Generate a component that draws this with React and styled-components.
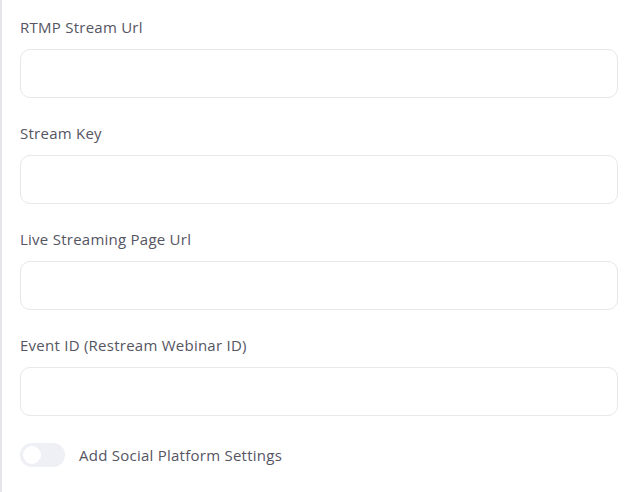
import { useState } from 'react'
import styled, { createGlobalStyle } from 'styled-components'

const GlobalStyle = createGlobalStyle`
  body {
    margin: 0;
    background: #ffffff;
    font-family: 'Open Sans', 'Liberation Sans', sans-serif;
  }
`

const Panel = styled.div`
  box-sizing: border-box;
  min-height: 492px;
  padding: 17px 25px 0 18px;
  border-left: 2px solid #e6e6ea;
  background: #ffffff;
`

const Field = styled.div`
  display: flex;
  flex-direction: column;
  gap: 12px;
  margin-bottom: 25px;
`

const Label = styled.label`
  font-size: 15px;
  font-weight: 500;
  line-height: 20px;
  letter-spacing: 0.25px;
  color: #555563;
`

const Input = styled.input`
  box-sizing: border-box;
  width: 100%;
  height: 49px;
  padding: 0 14px;
  border: 1px solid #e7e7ec;
  border-radius: 10px;
  background: #ffffff;
  font: inherit;
  font-size: 14px;
  color: #333;
  outline: none;
`

const ToggleRow = styled.div`
  display: flex;
  align-items: center;
  gap: 14px;
  margin-top: 27px;
`

const Switch = styled.button`
  position: relative;
  width: 45px;
  height: 24px;
  padding: 0;
  border: none;
  border-radius: 12px;
  background: ${(p) => (p.$on ? '#4f7cff' : '#eff0f5')};
  cursor: pointer;

  &::after {
    content: '';
    position: absolute;
    top: 3px;
    left: ${(p) => (p.$on ? '24px' : '3px')};
    width: 18px;
    height: 18px;
    border-radius: 50%;
    background: #ffffff;
  }
`

const ToggleText = styled.span`
  font-size: 15px;
  font-weight: 500;
  letter-spacing: 0.25px;
  color: #555563;
`

const fields = [
  'RTMP Stream Url',
  'Stream Key',
  'Live Streaming Page Url',
  'Event ID (Restream Webinar ID)',
]

function App() {
  const [social, setSocial] = useState(false)

  return (
    <>
      <GlobalStyle />
      <Panel>
        {fields.map((f) => (
          <Field key={f}>
            <Label>{f}</Label>
            <Input type="text" />
          </Field>
        ))}
        <ToggleRow>
          <Switch $on={social} onClick={() => setSocial(!social)} />
          <ToggleText>Add Social Platform Settings</ToggleText>
        </ToggleRow>
      </Panel>
    </>
  )
}

export default App
